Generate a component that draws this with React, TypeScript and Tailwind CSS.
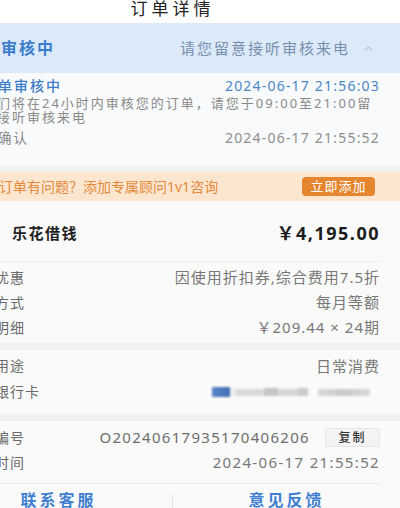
import React from "react";
import { ChevronUp } from "lucide-react";

const font = { fontFamily: '"Noto Sans", "Noto Sans CJK SC", sans-serif' };

interface Row {
  label: string;
  value: React.ReactNode;
}

const loanRows: Row[] = [
  { label: "费用优惠", value: "因使用折扣券,综合费用7.5折" },
  { label: "还款方式", value: "每月等额" },
  { label: "还款明细", value: "￥209.44 × 24期" },
];

const InfoRow: React.FC<Row & { h?: string }> = ({ label, value, h = "h-[25px]" }) => (
  <div className={`${h} flex items-center justify-between`}>
    <span className="text-[14px] tracking-[1px] text-[#6a6a6a] leading-none">{label}</span>
    <span className="text-[15px] tracking-[1px] text-[#787878] leading-none">{value}</span>
  </div>
);

// blurred card number placeholder
const MaskedCard: React.FC = () => (
  <div className="flex items-center blur-[1px]">
    <div className="w-[18px] h-[10px] bg-gradient-to-r from-[#5d86c6] to-[#3f6db3]" />
    <div className="w-[6px] h-[8px] bg-[#e8edf3]" />
    <div className="w-[28px] h-[7px] bg-[#d9d9d9]" />
    <div className="w-[14px] h-[8px] bg-[#c6c6c6]" />
    <div className="w-[20px] h-[7px] bg-[#d6d6d6]" />
    <div className="w-[10px] h-[8px] bg-[#cacaca]" />
    <div className="w-[10px]" />
    <div className="w-[52px] h-[7px] bg-gradient-to-r from-[#dadada] via-[#c9c9c9] to-[#dcdcdc]" />
  </div>
);

export default function App() {
  return (
    <div className="w-[400px] h-[508px] overflow-hidden bg-[#f1f1f1]" style={font}>
      <div className="ml-[-55px] w-[455px]">
        {/* header */}
        <div className="h-[23px] bg-white flex items-start justify-center">
          <span className="text-[17px] leading-[18px] tracking-[4px] text-[#222]">订单详情</span>
        </div>

        {/* status band */}
        <div className="h-[50px] bg-[#dce9f8] pl-5 pr-[25px] flex items-center justify-between">
          <span className="text-[16px] font-bold tracking-[2px] text-[#3b7dcc] leading-none">
            订单审核中
          </span>
          <div className="flex items-center gap-[12px]">
            <span className="text-[15px] tracking-[2px] text-[#7890b0] leading-none">
              请您留意接听审核来电
            </span>
            <ChevronUp size={13} strokeWidth={1.5} className="text-[#8a9bb3]" />
          </div>
        </div>

        {/* timeline */}
        <div className="bg-[#f9fafb] pl-[37px] pr-5 pt-[4px] pb-[19px]">
          <div className="h-[18px] flex items-center justify-between">
            <span className="text-[14px] tracking-[2px] font-medium text-[#3d7cc9] leading-none">
              订单审核中
            </span>
            <span className="text-[14px] tracking-[1.2px] text-[#4a86c8] leading-none">
              2024-06-17 21:56:03
            </span>
          </div>
          <div className="mt-[1px] text-[13px] tracking-[2px] text-[#8a8a8a] leading-[14px] whitespace-nowrap">
            <div>我们将在24小时内审核您的订单，请您于09:00至21:00留</div>
            <div>意接听审核来电</div>
          </div>
          <div className="mt-[5px] h-[18px] flex items-center justify-between">
            <span className="text-[14px] tracking-[1.5px] text-[#8a8a8a] leading-none">已确认</span>
            <span className="text-[14px] tracking-[1.2px] text-[#8f8f8f] leading-none">
              2024-06-17 21:55:52
            </span>
          </div>
        </div>

        <div className="h-[6px]" />

        {/* advisor banner */}
        <div className="h-[29px] bg-[#fce6cf] pl-[54px] pr-[25px] flex items-center justify-between">
          <span className="text-[14px] text-[#e38a3c] leading-none">
            订单有问题？添加专属顾问1v1咨询
          </span>
          <button className="w-[73px] h-[19px] rounded-[4px] bg-[#e5862f] text-white text-[13px] tracking-[1px] leading-none flex items-center justify-center">
            立即添加
          </button>
        </div>

        {/* loan summary */}
        <div className="bg-[#fafafa] px-5 pb-[3px]">
          <div className="h-[60px] pt-[4px] pl-[47px] flex items-center justify-between">
            <span className="text-[15px] font-bold tracking-[1.5px] text-[#222] leading-none">
              乐花借钱
            </span>
            <span className="text-[18px] font-bold tracking-[1.5px] text-[#1c1c1c] leading-none">
              ￥4,195.00
            </span>
          </div>
          <div className="border-t border-[#ececec] pt-[3px]">
            {loanRows.map((r) => (
              <InfoRow key={r.label} {...r} />
            ))}
          </div>
        </div>

        <div className="h-[7px]" />

        {/* usage + card */}
        <div className="bg-[#fafafa] px-5 pt-[3px] pb-[9px]">
          <InfoRow label="借款用途" value="日常消费" h="h-[26px]" />
          <div className="h-[26px] flex items-center justify-between">
            <span className="text-[14px] tracking-[1px] text-[#6a6a6a] leading-none">收款银行卡</span>
            <div className="pr-[10px]">
              <MaskedCard />
            </div>
          </div>
        </div>

        <div className="h-[7px]" />

        {/* order info */}
        <div className="bg-[#fafafa]">
          <div className="px-5 pt-[4px]">
            <div className="h-[25px] flex items-center justify-between">
              <span className="text-[14px] tracking-[1px] text-[#6a6a6a] leading-none">订单编号</span>
              <div className="flex items-center gap-[15px]">
                <span className="text-[15px] tracking-[1.3px] text-[#6e6e6e] leading-none">
                  O20240617935170406206
                </span>
                <button className="w-[55px] h-[19px] bg-[#f3f3f3] border border-[#e6e6e6] rounded-[2px] text-[12px] tracking-[2px] text-[#333] font-medium leading-none flex items-center justify-center">
                  复制
                </button>
              </div>
            </div>
            <div className="h-[25px] flex items-center justify-between">
              <span className="text-[14px] tracking-[1px] text-[#6a6a6a] leading-none">申请时间</span>
              <span className="text-[15px] tracking-[1.35px] text-[#787878] leading-none">
                2024-06-17 21:55:52
              </span>
            </div>
            <div className="mt-[8px] border-t border-[#ececec]" />
          </div>
          <div className="h-[32px] flex items-center">
            <div className="w-[227px] flex justify-center">
              <span className="text-[16px] font-bold tracking-[3px] text-[#3f7fd0] leading-none">
                联系客服
              </span>
            </div>
            <div className="w-px h-[20px] mt-[10px] bg-[#e3e3e3]" />
            <div className="flex-1 flex justify-center">
              <span className="text-[16px] font-bold tracking-[3px] text-[#3f7fd0] leading-none">
                意见反馈
              </span>
            </div>
          </div>
        </div>
      </div>
    </div>
  );
}
